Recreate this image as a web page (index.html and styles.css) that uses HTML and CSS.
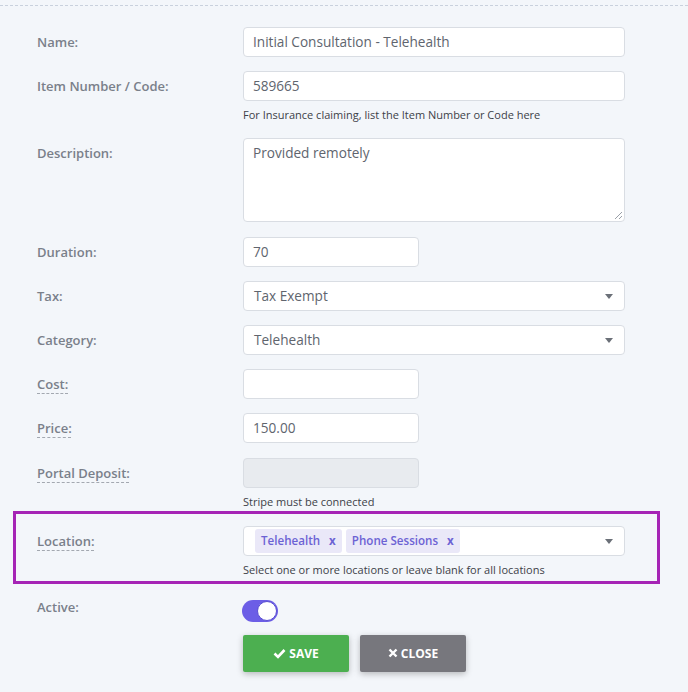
FILE: index.html
```html
<!DOCTYPE html>
<html>
<head>
<meta charset="utf-8">
<link rel="stylesheet" href="styles.css">
</head>
<body>
<div class="page">
  <form class="form">
    <div class="row">
      <label class="label">Name:</label>
      <div class="field"><div class="input wide">Initial Consultation - Telehealth</div></div>
    </div>
    <div class="row">
      <label class="label">Item Number / Code:</label>
      <div class="field">
        <div class="input wide">589665</div>
        <div class="help">For Insurance claiming, list the Item Number or Code here</div>
      </div>
    </div>
    <div class="row">
      <label class="label">Description:</label>
      <div class="field">
        <div class="input wide textarea">Provided remotely
          <svg class="grip" width="10" height="10" viewBox="0 0 10 10"><path d="M9 2 L2 9 M9 6 L6 9" stroke="#9aa0a8" stroke-width="1"/></svg>
        </div>
      </div>
    </div>
    <div class="row">
      <label class="label">Duration:</label>
      <div class="field"><div class="input short">70</div></div>
    </div>
    <div class="row">
      <label class="label">Tax:</label>
      <div class="field"><div class="input wide select">Tax Exempt<span class="caret"></span></div></div>
    </div>
    <div class="row">
      <label class="label">Category:</label>
      <div class="field"><div class="input wide select">Telehealth<span class="caret"></span></div></div>
    </div>
    <div class="row">
      <label class="label"><span class="dotted">Cost:</span></label>
      <div class="field"><div class="input short"></div></div>
    </div>
    <div class="row">
      <label class="label"><span class="dotted">Price:</span></label>
      <div class="field"><div class="input short">150.00</div></div>
    </div>
    <div class="row flush">
      <label class="label"><span class="dotted">Portal Deposit:</span></label>
      <div class="field">
        <div class="input short disabled"></div>
        <div class="help">Stripe must be connected</div>
      </div>
    </div>
    <div class="highlight">
      <div class="row inbox">
        <label class="label"><span class="dotted">Location:</span></label>
        <div class="field">
          <div class="input wide select tags">
            <span class="tag">Telehealth<span class="x">x</span></span>
            <span class="tag">Phone Sessions<span class="x">x</span></span>
            <span class="caret"></span>
          </div>
          <div class="help">Select one or more locations or leave blank for all locations</div>
        </div>
      </div>
    </div>
    <div class="row active-row">
      <label class="label">Active:</label>
      <div class="field"><span class="toggle"><span class="knob"></span></span></div>
    </div>
    <div class="row buttons">
      <span></span>
      <div class="btns">
        <button type="button" class="btn save"><svg width="13" height="11" viewBox="0 0 13 11"><path d="M1.5 5.5 L5 9 L11.5 2" fill="none" stroke="#fff" stroke-width="2.6"/></svg>SAVE</button>
        <button type="button" class="btn close"><svg width="10" height="10" viewBox="0 0 10 10"><path d="M1.5 1.5 L8.5 8.5 M8.5 1.5 L1.5 8.5" stroke="#fff" stroke-width="2.4"/></svg>CLOSE</button>
      </div>
    </div>
  </form>
</div>
</body>
</html>
```
FILE: styles.css
```css
html, body {
  margin: 0;
  padding: 0;
  background: #f3f6fa;
}
body {
  font-family: "Open Sans", "Liberation Sans", sans-serif;
  width: 688px;
  height: 692px;
  overflow: hidden;
}
.page {
  margin-top: 5px;
  border-top: 1px dashed #c9d1dd;
  padding-top: 21px;
}
.form {
  display: flex;
  flex-direction: column;
}
.row {
  display: grid;
  grid-template-columns: 206px 381px;
  padding-left: 37px;
  margin-bottom: 14.2px;
  align-items: start;
}
.row.flush { margin-bottom: 0; }
.label {
  font-size: 13px;
  font-weight: 600;
  color: #7a808a;
  line-height: 30px;
}
.dotted {
  text-decoration: underline dashed #a3a8b0 1px;
  text-underline-offset: 4px;
}
.input {
  box-sizing: border-box;
  height: 30px;
  background: #fff;
  border: 1px solid #d9dde3;
  border-radius: 4px;
  font-size: 13.6px;
  color: #60656e;
  line-height: 28px;
  padding: 0 9px;
  position: relative;
}
.input.wide { width: 382px; }
.input.short { width: 176px; }
.input.disabled { background: #e8ebef; }
.input.textarea {
  height: 84px;
  line-height: 20px;
  padding-top: 4px;
}
.grip {
  position: absolute;
  right: 1px;
  bottom: 1px;
}
.input.select { padding-left: 10px; }
.caret {
  position: absolute;
  right: 11px;
  top: 12px;
  width: 0;
  height: 0;
  border-left: 4.5px solid transparent;
  border-right: 4.5px solid transparent;
  border-top: 5px solid #6b7078;
}
.help {
  font-size: 11px;
  color: #3d4148;
  line-height: 18px;
  margin-top: 5px;
}
.highlight {
  box-sizing: border-box;
  margin-left: 13px;
  width: 647px;
  border: 3px solid #a524b5;
  padding: 12px 0 2px 0;
  margin-bottom: 8px;
}
.row.inbox {
  padding-left: 21px;
  margin-bottom: 0;
}
.input.tags {
  display: flex;
  align-items: center;
  gap: 4px;
  padding-left: 11px;
}
.tag {
  display: inline-flex;
  align-items: center;
  height: 24px;
  padding: 0 6px;
  background: #eae8f8;
  color: #6c62d4;
  border-radius: 3px;
  font-size: 11.6px;
  font-weight: 600;
  line-height: 24px;
}
.tag .x {
  margin-left: 9px;
  font-size: 11.6px;
  font-weight: 700;
}
.active-row { margin-bottom: 13px; }
.toggle {
  display: block;
  margin-top: 8px;
  margin-left: -1px;
  width: 36px;
  height: 22px;
  border-radius: 11px;
  background: #6c5ee6;
  position: relative;
}
.knob {
  position: absolute;
  right: 1px;
  top: 1px;
  width: 18px;
  height: 18px;
  border-radius: 50%;
  background: #fff;
  border: 1px solid #5a4fd0;
}
.btns {
  display: flex;
  gap: 11px;
}
.btn {
  box-sizing: border-box;
  width: 106px;
  height: 37px;
  border: none;
  border-radius: 2px;
  color: #fff;
  font-family: "Open Sans", "Liberation Sans", sans-serif;
  font-size: 12px;
  font-weight: 700;
  display: inline-flex;
  align-items: center;
  justify-content: center;
  gap: 3px;
  box-shadow: 0 2px 6px rgba(0, 0, 0, 0.25);
  padding: 0;
}
.save { background: #4caf50; }
.close { background: #77777d; }
```
